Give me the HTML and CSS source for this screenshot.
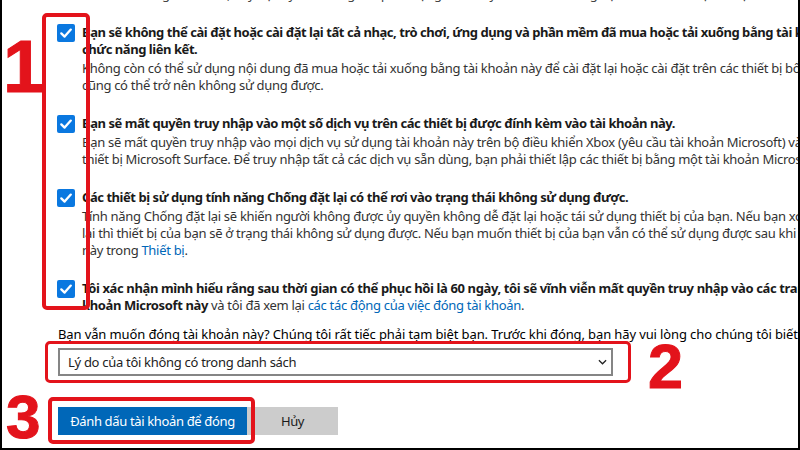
FILE: index.html
```html
<!DOCTYPE html>
<html lang="vi">
<head>
<meta charset="utf-8">
<title>Đóng tài khoản</title>
<link rel="stylesheet" href="styles.css">
</head>
<body>
<div class="frame">
  <div class="page">
    <p class="cut">Trước khi đóng tài khoản, hãy đọc kỹ các thông tin quan trọng dưới đây và đảm bảo rằng bạn đã sao lưu mọi dữ liệu của mình ở nơi khác để dùng lại sau này</p>
    <ul class="checks">
      <li class="check">
        <span class="box"><svg viewBox="0 0 18 18" width="18" height="18"><path d="M4.3 9.4 L7.6 12.6 L13.8 5.6" fill="none" stroke="#fff" stroke-width="2.3" stroke-linecap="round" stroke-linejoin="round"/></svg></span>
        <div class="body">
          <p class="title">Bạn sẽ không thể cài đặt hoặc cài đặt lại tất cả nhạc, trò chơi, ứng dụng và phần mềm đã mua hoặc tải xuống bằng tài khoản này, cũng như các<br>chức năng liên kết.</p>
          <p class="desc">Không còn có thể sử dụng nội dung đã mua hoặc tải xuống bằng tài khoản này để cài đặt lại hoặc cài đặt trên các thiết bị bổ sung. Một số nội dung<br>cũng có thể trở nên không sử dụng được.</p>
        </div>
      </li>
      <li class="check">
        <span class="box"><svg viewBox="0 0 18 18" width="18" height="18"><path d="M4.3 9.4 L7.6 12.6 L13.8 5.6" fill="none" stroke="#fff" stroke-width="2.3" stroke-linecap="round" stroke-linejoin="round"/></svg></span>
        <div class="body">
          <p class="title">Bạn sẽ mất quyền truy nhập vào một số dịch vụ trên các thiết bị được đính kèm vào tài khoản này.</p>
          <p class="desc">Bạn sẽ mất quyền truy nhập vào mọi dịch vụ sử dụng tài khoản này trên bộ điều khiển Xbox (yêu cầu tài khoản Microsoft) và<br>thiết bị Microsoft Surface. Để truy nhập tất cả các dịch vụ sẵn dùng, bạn phải thiết lập các thiết bị bằng một tài khoản Microsoft khác.</p>
        </div>
      </li>
      <li class="check">
        <span class="box"><svg viewBox="0 0 18 18" width="18" height="18"><path d="M4.3 9.4 L7.6 12.6 L13.8 5.6" fill="none" stroke="#fff" stroke-width="2.3" stroke-linecap="round" stroke-linejoin="round"/></svg></span>
        <div class="body">
          <p class="title">Các thiết bị sử dụng tính năng Chống đặt lại có thể rơi vào trạng thái không sử dụng được.</p>
          <p class="desc">Tính năng Chống đặt lại sẽ khiến người không được ủy quyền không dễ đặt lại hoặc tái sử dụng thiết bị của bạn. Nếu bạn xóa thiết bị khỏi<br>lại thì thiết bị của bạn sẽ ở trạng thái không sử dụng được. Nếu bạn muốn thiết bị của bạn vẫn có thể sử dụng được sau khi đóng tài khoản,<br>này trong <a href="#" class="link">Thiết bị</a>.</p>
        </div>
      </li>
      <li class="check">
        <span class="box"><svg viewBox="0 0 18 18" width="18" height="18"><path d="M4.3 9.4 L7.6 12.6 L13.8 5.6" fill="none" stroke="#fff" stroke-width="2.3" stroke-linecap="round" stroke-linejoin="round"/></svg></span>
        <div class="body">
          <p class="title t4">Tôi xác nhận mình hiểu rằng sau thời gian có thể phục hồi là 60 ngày, tôi sẽ vĩnh viễn mất quyền truy nhập vào các trang web và dịch vụ của tài<br>khoản Microsoft này <span class="plain">và tôi đã xem lại <a href="#" class="link">các tác động của việc đóng tài khoản</a>.</span></p>
        </div>
      </li>
    </ul>
    <p class="ask">Bạn vẫn muốn đóng tài khoản này? Chúng tôi rất tiếc phải tạm biệt bạn. Trước khi đóng, bạn hãy vui lòng cho chúng tôi biết tại sao bạn rời đi.</p>
    <div class="select">
      <span class="select-text">Lý do của tôi không có trong danh sách</span>
      <svg class="chev" viewBox="0 0 10 6" width="9" height="6"><path d="M1 1 L5 5 L9 1" fill="none" stroke="#222" stroke-width="1.4"/></svg>
    </div>
    <div class="actions">
      <button class="btn primary">Đánh dấu tài khoản để đóng</button>
      <button class="btn secondary">Hủy</button>
    </div>
  </div>
  <div class="mark mark1"></div>
  <div class="mark mark2"></div>
  <div class="mark mark3"></div>
  <span class="num num1">1</span>
  <span class="num num2">2</span>
  <span class="num num3">3</span>
</div>
</body>
</html>
```
FILE: styles.css
```css
* { box-sizing: border-box; }
html, body { margin: 0; padding: 0; background: #fff; overflow: hidden; }
body { width: 800px; height: 450px; font-family: "Noto Sans", "Open Sans", sans-serif; font-size: 13px; letter-spacing: -0.3px; color: #2b2b2b; }

.frame {
  position: relative;
  width: 800px;
  height: 450px;
  border-left: 2px solid #000;
  border-right: 2px solid #000;
  border-bottom: 2px solid #000;
  overflow: hidden;
}
.page { padding-left: 55px; white-space: nowrap; }

p { margin: 0; }
.cut { line-height: 17px; margin-top: -14px; color: #444; padding-left: 25px; }

.checks { list-style: none; margin: 21px 0 0; padding: 0; display: flex; flex-direction: column; gap: 21px; }
.check { display: flex; gap: 7px; align-items: flex-start; }
.box { flex: none; width: 18px; height: 18px; background: #0a78e0; border-radius: 2px; display: flex; }
.title { font-weight: 700; color: #1a1a1a; line-height: 17px; letter-spacing: -0.45px; }
.t4 { letter-spacing: -0.38px; }
.desc { line-height: 17px; margin-top: 2px; color: #333; }
.plain { font-weight: 400; color: #333; letter-spacing: -0.3px; }
.link { color: #0067b8; text-decoration: none; }

.ask { margin-top: 12px; padding-left: 1px; line-height: 17px; color: #000; letter-spacing: -0.12px; }

.select {
  margin: 5px 0 0 1px;
  width: 555px;
  height: 28px;
  border: 2px solid #858585;
  display: flex;
  align-items: center;
  justify-content: space-between;
  padding: 0 4px 0 8px;
  color: #222;
}

.actions { margin: 31px 0 0 1px; display: flex; }
.btn { font-family: inherit; font-size: 13px; letter-spacing: -0.35px; height: 28px; border: none; border-radius: 0; padding: 0; }
.primary { width: 189px; background: #0067b8; color: #fff; }
.secondary { width: 91px; background: #cccccc; color: #1a1a1a; }

.mark { position: absolute; border: 4px solid #e3131b; border-radius: 5px; }
.mark1 { left: 40px; top: 13px; width: 48px; height: 297px; }
.mark2 { left: 43px; top: 341px; width: 586px; height: 42px; border-width: 3px; }
.mark3 { left: 46px; top: 397px; width: 207px; height: 47px; }

.num { position: absolute; font-family: "Liberation Sans", Arial, sans-serif; font-weight: 700; color: #e3131b; line-height: 1; letter-spacing: 0; -webkit-text-stroke: 1px #e3131b; }
.num1 { left: 1px; top: 30px; font-size: 74px; }
.num2 { left: 646px; top: 335px; font-size: 63px; }
.num3 { left: 4px; top: 386px; font-size: 62px; }
```
